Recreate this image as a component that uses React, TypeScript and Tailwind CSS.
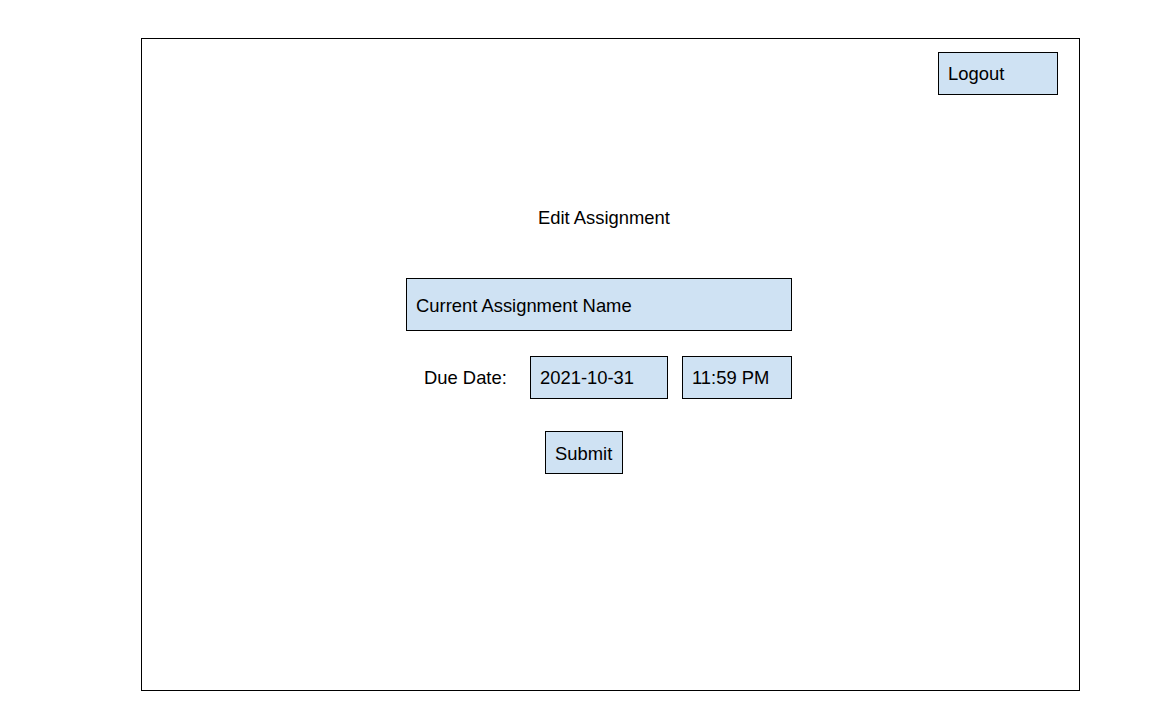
export default function App() {
  const box = "border border-black bg-[#cfe2f3] flex items-center";
  return (
    <div className="w-[1168px] h-[721px] bg-white pt-[38px] pl-[141px] text-black text-[18.4px] leading-none" style={{ fontFamily: '"Liberation Sans", Arial, sans-serif' }}>
      <div className="w-[939px] h-[653px] border border-black flex flex-col items-start">
        <div className={`${box} self-end mr-[21px] mt-[13px] w-[120px] h-[43px] pl-[9px] pt-[2px]`}>Logout</div>
        <div className="ml-[396px] mt-[110px] h-[24px] flex items-center pt-[2px]">Edit Assignment</div>
        <div className={`${box} ml-[264px] mt-[49px] w-[386px] h-[53px] pl-[9px] pt-[4px]`}>Current Assignment Name</div>
        <div className="ml-[282px] mt-[25px] h-[43px] flex items-center">
          <div className="w-[106px] pt-[1px]">Due Date:</div>
          <div className={`${box} w-[138px] h-[43px] pl-[9px] pt-[1px]`}>2021-10-31</div>
          <div className={`${box} ml-[14px] w-[110px] h-[43px] pl-[9px] pt-[1px]`}>11:59 PM</div>
        </div>
        <div className={`${box} ml-[403px] mt-[32px] w-[78px] h-[43px] pl-[9px] pt-[3px]`}>Submit</div>
      </div>
    </div>
  );
}
